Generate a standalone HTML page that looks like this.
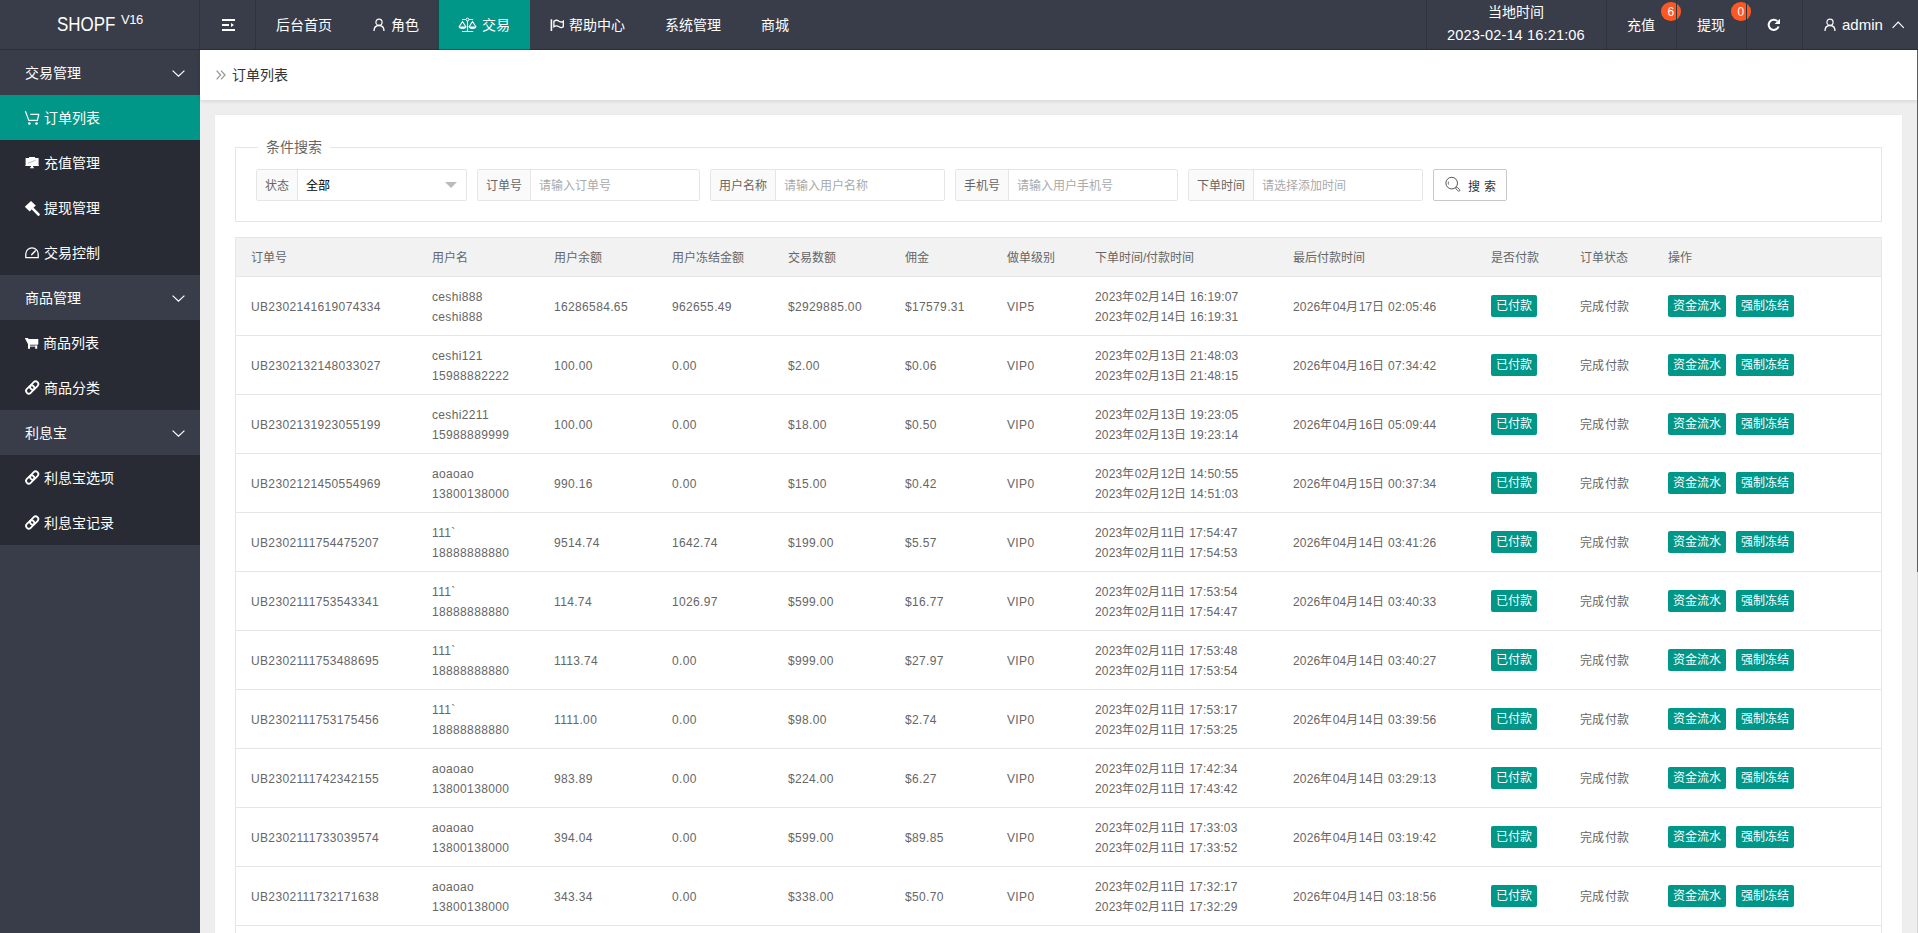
<!DOCTYPE html>
<html lang="zh-CN"><head><meta charset="utf-8">
<style>
*{margin:0;padding:0;box-sizing:border-box}
html,body{width:1918px;height:933px;overflow:hidden;background:#EEEEEE;font-family:"Liberation Sans",sans-serif;font-size:14px;color:#333}
.abs{position:absolute}
#hd{position:absolute;left:0;top:0;width:1918px;height:50px;background:#393D49}
#hdb{position:absolute;left:0;top:49px;width:1918px;height:1px;background:rgba(0,0,0,.22);z-index:5}
#hd .t{position:absolute;color:#fff;font-size:14px;line-height:14px;white-space:nowrap}
.sep{position:absolute;top:0;width:1px;height:50px;background:#30333d}
#logo{position:absolute;left:0;top:0;width:200px;height:50px;color:#fff;font-size:20px}
.badge{position:absolute;width:19.5px;height:18.5px;border-radius:50%;background:#FF5722;color:#fff;font-size:12px;line-height:20px;text-align:center}
#navact{position:absolute;left:438px;top:0;width:92px;height:50px;background:#009688;border-left:1px solid #0d4f4c}
#side{position:absolute;left:0;top:50px;width:200px;height:883px;background:#393D49}
.grp{position:absolute;left:0;width:200px;height:45px;color:#fff;font-size:14px}
.sub{position:absolute;left:0;width:200px;background:#282B33}
.item{position:absolute;left:0;width:200px;height:45px;color:#fff;font-size:14px}
.item.on{background:#009688}
.lbl{position:absolute;top:16px;line-height:14px;white-space:nowrap}
#crumb{position:absolute;left:200px;top:50px;width:1717px;height:50px;background:#fff;box-shadow:0 1px 4px rgba(0,0,0,.12)}
#rb{position:absolute;left:1917px;top:50px;width:1px;height:522px;background:#5c5c5c;z-index:3}
#rb2{position:absolute;left:1917px;top:572px;width:1px;height:361px;background:#d4d4d4;z-index:3}
#card{position:absolute;left:215px;top:115px;width:1687px;height:830px;background:#fff;box-shadow:0 0 1px rgba(0,0,0,.08)}
#fs{position:absolute;left:235px;top:147px;width:1647px;height:75px;border:1px solid #E6E6E6}
#legend{position:absolute;left:258px;top:139px;padding:0 8px;background:#fff;color:#666;font-size:14px;line-height:16px}
.ig{position:absolute;top:169px;height:32px;border:1px solid #E6E6E6;border-radius:2px;background:#fff}
.ig .l{position:absolute;left:0;top:0;height:30px;padding-top:1px;background:#FAFAFA;border-right:1px solid #E6E6E6;color:#666;font-size:12px;line-height:30px;text-align:center}
.ig .p{position:absolute;top:1px;line-height:30px;font-size:12px;color:#aaa;white-space:nowrap}
#btn{position:absolute;left:1433px;top:169px;width:74px;height:32px;border:1px solid #C9C9C9;border-radius:2px;background:#fff}
#tbl{position:absolute;left:235px;top:237px;width:1647px;height:700px;border-left:1px solid #E6E6E6;border-right:1px solid #E6E6E6}
.th{position:absolute;left:0;width:1645px;height:40px;background:#F2F2F2;border-top:1px solid #E6E6E6;border-bottom:1px solid #E6E6E6;margin-top:-237px}
.tr{position:absolute;left:0;width:1645px;height:60px;border-bottom:1px solid #E6E6E6;margin-top:-237px}
.c{position:absolute;top:2px;line-height:58px;font-size:12px;color:#666;white-space:nowrap;letter-spacing:0.35px}
.th .c{line-height:38px;top:1px;letter-spacing:0}
.c.two{line-height:20px;top:11px}
.btn{position:absolute;top:19px;height:22px;padding:0 5px;background:#009688;color:#fff;font-size:12px;line-height:23px;border-radius:2px;white-space:nowrap}
</style></head><body>
<div id="hd">
  <div id="logo"><span class="t" style="left:56.5px;top:15.3px;font-size:19.8px;line-height:19.8px;transform:scaleX(0.856);transform-origin:0 0">SHOPF</span><span class="t" style="left:121px;top:13.4px;font-size:13px;line-height:13px;letter-spacing:-0.4px">V16</span></div>
  <div class="sep" style="left:199px"></div>
  <svg class="abs" style="left:222px;top:19px" width="14" height="12" viewBox="0 0 14 12"><rect x="0" y="0" width="13" height="2" fill="#fff"/><rect x="0" y="5" width="7" height="2" fill="#fff"/><path d="M9 4 L12 6 L9 8Z" fill="#fff"/><rect x="0" y="10" width="13" height="2" fill="#fff"/></svg>
  <div class="sep" style="left:255px"></div>
  <span class="t" style="left:276px;top:18px">后台首页</span>
  <svg class="abs" style="left:373px;top:18px" width="12" height="13" viewBox="0 0 12 13"><circle cx="6" cy="4.2" r="3.1" fill="none" stroke="#fff" stroke-width="1.2"/><path d="M1 13 C1 9 3 7.5 6 7.5 C9 7.5 11 9 11 13" fill="none" stroke="#fff" stroke-width="1.3"/></svg>
  <span class="t" style="left:391px;top:18px">角色</span>
  <div id="navact"></div>
  <svg class="abs" style="left:454px;top:12px" width="30" height="26" viewBox="0 0 30 26"><path d="M8 7.5 H19.2 M13.5 8.5 V19.5 M8 19.5 H19.2 M5 15 L8.5 9.5 L12 15 M15 15 L18.5 9.5 L22 15" fill="none" stroke="#fff" stroke-width="1.1"/><circle cx="13.5" cy="7.5" r="1.4" fill="#009688" stroke="#fff" stroke-width="1"/><path d="M4.6 14.6 H12.4 A3.9 2.3 0 0 1 4.6 14.6Z M14.6 14.6 H22.4 A3.9 2.3 0 0 1 14.6 14.6Z" fill="#fff"/></svg>
  <span class="t" style="left:482px;top:18px">交易</span>
  <svg class="abs" style="left:544px;top:12px" width="26" height="26" viewBox="0 0 26 26"><path d="M7.4 7.3 V19" stroke="#fff" stroke-width="1.6"/><path d="M9.9 9.2 C11.6 8 13.4 8 15 9.2 C16.6 10.3 18.2 10.2 19.3 9.2 V14.8 C18.2 15.8 16.6 15.9 15 14.8 C13.4 13.7 11.6 13.6 9.9 14.8 Z" fill="none" stroke="#fff" stroke-width="1.3"/></svg>
  <span class="t" style="left:569px;top:18px">帮助中心</span>
  <span class="t" style="left:665px;top:18px">系统管理</span>
  <span class="t" style="left:761px;top:18px">商城</span>

  <div class="sep" style="left:1426px"></div>
  <span class="t" style="left:1488px;top:5px">当地时间</span>
  <span class="t" style="left:1447px;top:28px;font-size:14.6px;letter-spacing:0.12px">2023-02-14 16:21:06</span>
  <div class="sep" style="left:1606px"></div>
  <span class="t" style="left:1627px;top:18px">充值</span>
  <div class="badge" style="left:1661px;top:2px">6</div>
  <div class="sep" style="left:1676px"></div>
  <span class="t" style="left:1697px;top:18px">提现</span>
  <div class="badge" style="left:1731px;top:2px">0</div>
  <div class="sep" style="left:1746px"></div>
  <svg class="abs" style="left:1767px;top:18px" width="14" height="14" viewBox="0 0 14 14"><path d="M11.6 8.5 A5.1 5.1 0 1 1 10.3 3.1" fill="none" stroke="#fff" stroke-width="2"/><path d="M13 0.7 V6.1 H7.6Z" fill="#fff"/></svg>
  <div class="sep" style="left:1802px"></div>
  <svg class="abs" style="left:1824px;top:18px" width="12" height="13" viewBox="0 0 12 13"><circle cx="6" cy="4.2" r="3.1" fill="none" stroke="#fff" stroke-width="1.2"/><path d="M1 13 C1 9 3 7.5 6 7.5 C9 7.5 11 9 11 13" fill="none" stroke="#fff" stroke-width="1.3"/></svg>
  <span class="t" style="left:1842px;top:18px;font-size:15px">admin</span>
  <svg class="abs" style="left:1892px;top:21px" width="13" height="8" viewBox="0 0 13 8"><path d="M0.6 6.9 L6.2 1.2 L11.8 6.9" fill="none" stroke="#fff" stroke-width="1.2"/></svg>
</div>

<div id="hdb"></div>
<div id="side">
  <div class="grp" style="top:0"><span class="lbl" style="left:25px">交易管理</span>
    <svg class="abs" style="left:171.5px;top:19.5px" width="13" height="7" viewBox="0 0 13 7"><path d="M0.6 0.6 L6.5 6.2 L12.4 0.6" fill="none" stroke="#fff" stroke-width="1.2"/></svg></div>
  <div class="sub" style="top:45px;height:180px">
    <div class="item on" style="top:0"><svg class="abs" style="left:20px;top:10px" width="24" height="25" viewBox="0 0 24 25"><path d="M5.4 6.3 L8.8 15.4 H17.4 L18.8 9.4 H10.3" fill="none" stroke="#fff" stroke-width="1.2" stroke-linejoin="round"/><circle cx="9.3" cy="18.5" r="1.3" fill="#fff"/><circle cx="16.5" cy="18.5" r="1.3" fill="#fff"/></svg><span class="lbl" style="left:44px">订单列表</span></div>
    <div class="item" style="top:45px"><svg class="abs" style="left:20px;top:10px" width="24" height="25" viewBox="0 0 24 25"><path d="M5.6 8 H9 L9.2 7 H15 L15.2 8 H18.6 V15.2 L19.2 15.9 H5 L5.6 15.2Z" fill="#fff"/><path d="M11 15.8 H13 V16.6 L14.2 18.2 H9.8 L11 16.6Z" fill="#fff"/><path d="M8 13 L10.5 12.3 L12.5 11.5 L15.5 10.3" fill="none" stroke="#8a8d94" stroke-width="0.6"/></svg><span class="lbl" style="left:44px">充值管理</span></div>
    <div class="item" style="top:90px"><svg class="abs" style="left:20px;top:10px" width="24" height="25" viewBox="0 0 24 25"><path d="M4.8 11.8 L11 6 L15.8 10.5 L9.7 16.4Z" fill="#fff"/><path d="M13.2 14.2 L18.5 19.5" stroke="#fff" stroke-width="2.6" stroke-linecap="round"/></svg><span class="lbl" style="left:44px">提现管理</span></div>
    <div class="item" style="top:135px"><svg class="abs" style="left:20px;top:10px" width="24" height="25" viewBox="0 0 24 25"><path d="M5.8 17.6 V14 A6.2 6.2 0 0 1 18.2 14 V17.6 Z" fill="none" stroke="#fff" stroke-width="1.3"/><path d="M11.8 14.6 L15.2 10.9" stroke="#fff" stroke-width="1.5" stroke-linecap="round"/></svg><span class="lbl" style="left:44px">交易控制</span></div>
  </div>
  <div class="grp" style="top:225px"><span class="lbl" style="left:25px">商品管理</span>
    <svg class="abs" style="left:171.5px;top:19.5px" width="13" height="7" viewBox="0 0 13 7"><path d="M0.6 0.6 L6.5 6.2 L12.4 0.6" fill="none" stroke="#fff" stroke-width="1.2"/></svg></div>
  <div class="sub" style="top:270px;height:90px">
    <div class="item" style="top:0"><svg class="abs" style="left:20px;top:10px" width="24" height="25" viewBox="0 0 24 25"><path d="M4.8 8 H8 L8.4 9 H18.3 V14.2 L17.6 14.8 H8.3Z" fill="#fff"/><rect x="8" y="14" width="2" height="4.8" fill="#fff"/><rect x="15.2" y="15.6" width="2" height="3.2" fill="#fff"/><rect x="8" y="15.6" width="9.2" height="1" fill="#fff"/></svg><span class="lbl" style="left:43px">商品列表</span></div>
    <div class="item" style="top:45px"><svg class="abs" style="left:20px;top:10px" width="24" height="25" viewBox="0 0 24 25"><g transform="rotate(-45 12.2 12.5)"><rect x="4.7" y="9.8" width="9.4" height="5.4" rx="2.7" fill="none" stroke="#fff" stroke-width="1.8"/><rect x="10.3" y="9.8" width="9.4" height="5.4" rx="2.7" fill="none" stroke="#fff" stroke-width="1.8"/></g></svg><span class="lbl" style="left:44px">商品分类</span></div>
  </div>
  <div class="grp" style="top:360px"><span class="lbl" style="left:25px">利息宝</span>
    <svg class="abs" style="left:171.5px;top:19.5px" width="13" height="7" viewBox="0 0 13 7"><path d="M0.6 0.6 L6.5 6.2 L12.4 0.6" fill="none" stroke="#fff" stroke-width="1.2"/></svg></div>
  <div class="sub" style="top:405px;height:90px">
    <div class="item" style="top:0"><svg class="abs" style="left:20px;top:10px" width="24" height="25" viewBox="0 0 24 25"><g transform="rotate(-45 12.2 12.5)"><rect x="4.7" y="9.8" width="9.4" height="5.4" rx="2.7" fill="none" stroke="#fff" stroke-width="1.8"/><rect x="10.3" y="9.8" width="9.4" height="5.4" rx="2.7" fill="none" stroke="#fff" stroke-width="1.8"/></g></svg><span class="lbl" style="left:44px">利息宝选项</span></div>
    <div class="item" style="top:45px"><svg class="abs" style="left:20px;top:10px" width="24" height="25" viewBox="0 0 24 25"><g transform="rotate(-45 12.2 12.5)"><rect x="4.7" y="9.8" width="9.4" height="5.4" rx="2.7" fill="none" stroke="#fff" stroke-width="1.8"/><rect x="10.3" y="9.8" width="9.4" height="5.4" rx="2.7" fill="none" stroke="#fff" stroke-width="1.8"/></g></svg><span class="lbl" style="left:44px">利息宝记录</span></div>
  </div>
</div>

<div id="crumb">
  <svg class="abs" style="left:16px;top:20px" width="10" height="10" viewBox="0 0 10 10"><path d="M0.6 0.6 L4.6 5 L0.6 9.4 M5 0.6 L9 5 L5 9.4" fill="none" stroke="#999" stroke-width="1.3"/></svg>
  <span class="abs" style="left:32px;top:18px;font-size:14px;line-height:14px;color:#333">订单列表</span>
</div>
<div id="rb"></div><div id="rb2"></div>

<div id="card"></div>
<div id="fs"></div>
<div id="legend">条件搜索</div>

<div class="ig" style="left:256px;width:211px"><div class="l" style="width:41px">状态</div><span class="p" style="left:49px;color:#000">全部</span>
  <svg class="abs" style="left:188px;top:12px" width="12" height="7" viewBox="0 0 12 7"><path d="M0 0 H12 L6 6Z" fill="#bbb"/></svg></div>
<div class="ig" style="left:477px;width:223px"><div class="l" style="width:53px">订单号</div><span class="p" style="left:61px">请输入订单号</span></div>
<div class="ig" style="left:710px;width:235px"><div class="l" style="width:65px">用户名称</div><span class="p" style="left:73px">请输入用户名称</span></div>
<div class="ig" style="left:955px;width:223px"><div class="l" style="width:53px">手机号</div><span class="p" style="left:61px">请输入用户手机号</span></div>
<div class="ig" style="left:1188px;width:235px"><div class="l" style="width:65px">下单时间</div><span class="p" style="left:73px">请选择添加时间</span></div>
<div id="btn"><svg class="abs" style="left:10px;top:6px" width="18" height="18" viewBox="0 0 18 18"><circle cx="7.7" cy="7.1" r="5.8" fill="none" stroke="#555" stroke-width="1"/><path d="M4.6 5.6 A3.4 3.4 0 0 0 4.6 8.6" fill="none" stroke="#666" stroke-width="0.9"/><g transform="rotate(45 13.6 13)"><rect x="11.4" y="12" width="5" height="2" rx="1" fill="#fff" stroke="#555" stroke-width="0.9"/></g></svg><span class="abs" style="left:34px;top:9.5px;font-size:12px;line-height:14px;color:#333;letter-spacing:4px">搜索</span></div>

<div id="tbl">
<div class="th" style="top:237px">
<span class="c" style="left:15px">订单号</span>
<span class="c" style="left:196px">用户名</span>
<span class="c" style="left:318px">用户余额</span>
<span class="c" style="left:436px">用户冻结金额</span>
<span class="c" style="left:552px">交易数额</span>
<span class="c" style="left:669px">佣金</span>
<span class="c" style="left:771px">做单级别</span>
<span class="c" style="left:859px">下单时间/付款时间</span>
<span class="c" style="left:1057px">最后付款时间</span>
<span class="c" style="left:1255px">是否付款</span>
<span class="c" style="left:1344px">订单状态</span>
<span class="c" style="left:1432px">操作</span>
</div>
<div class="tr" style="top:276px">
<span class="c" style="left:15px">UB2302141619074334</span>
<span class="c two" style="left:196px">ceshi888<br>ceshi888</span>
<span class="c" style="left:318px">16286584.65</span>
<span class="c" style="left:436px">962655.49</span>
<span class="c" style="left:552px">$2929885.00</span>
<span class="c" style="left:669px">$17579.31</span>
<span class="c" style="left:771px">VIP5</span>
<span class="c two" style="left:859px;letter-spacing:0.2px">2023年02月14日 16:19:07<br>2023年02月14日 16:19:31</span>
<span class="c" style="left:1057px;letter-spacing:0.2px">2026年04月17日 02:05:46</span>
<span class="btn" style="left:1255px">已付款</span>
<span class="c" style="left:1344px">完成付款</span>
<span class="btn" style="left:1432px">资金流水</span><span class="btn" style="left:1500px">强制冻结</span>
</div>
<div class="tr" style="top:335px">
<span class="c" style="left:15px">UB2302132148033027</span>
<span class="c two" style="left:196px">ceshi121<br>15988882222</span>
<span class="c" style="left:318px">100.00</span>
<span class="c" style="left:436px">0.00</span>
<span class="c" style="left:552px">$2.00</span>
<span class="c" style="left:669px">$0.06</span>
<span class="c" style="left:771px">VIP0</span>
<span class="c two" style="left:859px;letter-spacing:0.2px">2023年02月13日 21:48:03<br>2023年02月13日 21:48:15</span>
<span class="c" style="left:1057px;letter-spacing:0.2px">2026年04月16日 07:34:42</span>
<span class="btn" style="left:1255px">已付款</span>
<span class="c" style="left:1344px">完成付款</span>
<span class="btn" style="left:1432px">资金流水</span><span class="btn" style="left:1500px">强制冻结</span>
</div>
<div class="tr" style="top:394px">
<span class="c" style="left:15px">UB2302131923055199</span>
<span class="c two" style="left:196px">ceshi2211<br>15988889999</span>
<span class="c" style="left:318px">100.00</span>
<span class="c" style="left:436px">0.00</span>
<span class="c" style="left:552px">$18.00</span>
<span class="c" style="left:669px">$0.50</span>
<span class="c" style="left:771px">VIP0</span>
<span class="c two" style="left:859px;letter-spacing:0.2px">2023年02月13日 19:23:05<br>2023年02月13日 19:23:14</span>
<span class="c" style="left:1057px;letter-spacing:0.2px">2026年04月16日 05:09:44</span>
<span class="btn" style="left:1255px">已付款</span>
<span class="c" style="left:1344px">完成付款</span>
<span class="btn" style="left:1432px">资金流水</span><span class="btn" style="left:1500px">强制冻结</span>
</div>
<div class="tr" style="top:453px">
<span class="c" style="left:15px">UB2302121450554969</span>
<span class="c two" style="left:196px">aoaoao<br>13800138000</span>
<span class="c" style="left:318px">990.16</span>
<span class="c" style="left:436px">0.00</span>
<span class="c" style="left:552px">$15.00</span>
<span class="c" style="left:669px">$0.42</span>
<span class="c" style="left:771px">VIP0</span>
<span class="c two" style="left:859px;letter-spacing:0.2px">2023年02月12日 14:50:55<br>2023年02月12日 14:51:03</span>
<span class="c" style="left:1057px;letter-spacing:0.2px">2026年04月15日 00:37:34</span>
<span class="btn" style="left:1255px">已付款</span>
<span class="c" style="left:1344px">完成付款</span>
<span class="btn" style="left:1432px">资金流水</span><span class="btn" style="left:1500px">强制冻结</span>
</div>
<div class="tr" style="top:512px">
<span class="c" style="left:15px">UB2302111754475207</span>
<span class="c two" style="left:196px">111`<br>18888888880</span>
<span class="c" style="left:318px">9514.74</span>
<span class="c" style="left:436px">1642.74</span>
<span class="c" style="left:552px">$199.00</span>
<span class="c" style="left:669px">$5.57</span>
<span class="c" style="left:771px">VIP0</span>
<span class="c two" style="left:859px;letter-spacing:0.2px">2023年02月11日 17:54:47<br>2023年02月11日 17:54:53</span>
<span class="c" style="left:1057px;letter-spacing:0.2px">2026年04月14日 03:41:26</span>
<span class="btn" style="left:1255px">已付款</span>
<span class="c" style="left:1344px">完成付款</span>
<span class="btn" style="left:1432px">资金流水</span><span class="btn" style="left:1500px">强制冻结</span>
</div>
<div class="tr" style="top:571px">
<span class="c" style="left:15px">UB2302111753543341</span>
<span class="c two" style="left:196px">111`<br>18888888880</span>
<span class="c" style="left:318px">114.74</span>
<span class="c" style="left:436px">1026.97</span>
<span class="c" style="left:552px">$599.00</span>
<span class="c" style="left:669px">$16.77</span>
<span class="c" style="left:771px">VIP0</span>
<span class="c two" style="left:859px;letter-spacing:0.2px">2023年02月11日 17:53:54<br>2023年02月11日 17:54:47</span>
<span class="c" style="left:1057px;letter-spacing:0.2px">2026年04月14日 03:40:33</span>
<span class="btn" style="left:1255px">已付款</span>
<span class="c" style="left:1344px">完成付款</span>
<span class="btn" style="left:1432px">资金流水</span><span class="btn" style="left:1500px">强制冻结</span>
</div>
<div class="tr" style="top:630px">
<span class="c" style="left:15px">UB2302111753488695</span>
<span class="c two" style="left:196px">111`<br>18888888880</span>
<span class="c" style="left:318px">1113.74</span>
<span class="c" style="left:436px">0.00</span>
<span class="c" style="left:552px">$999.00</span>
<span class="c" style="left:669px">$27.97</span>
<span class="c" style="left:771px">VIP0</span>
<span class="c two" style="left:859px;letter-spacing:0.2px">2023年02月11日 17:53:48<br>2023年02月11日 17:53:54</span>
<span class="c" style="left:1057px;letter-spacing:0.2px">2026年04月14日 03:40:27</span>
<span class="btn" style="left:1255px">已付款</span>
<span class="c" style="left:1344px">完成付款</span>
<span class="btn" style="left:1432px">资金流水</span><span class="btn" style="left:1500px">强制冻结</span>
</div>
<div class="tr" style="top:689px">
<span class="c" style="left:15px">UB2302111753175456</span>
<span class="c two" style="left:196px">111`<br>18888888880</span>
<span class="c" style="left:318px">1111.00</span>
<span class="c" style="left:436px">0.00</span>
<span class="c" style="left:552px">$98.00</span>
<span class="c" style="left:669px">$2.74</span>
<span class="c" style="left:771px">VIP0</span>
<span class="c two" style="left:859px;letter-spacing:0.2px">2023年02月11日 17:53:17<br>2023年02月11日 17:53:25</span>
<span class="c" style="left:1057px;letter-spacing:0.2px">2026年04月14日 03:39:56</span>
<span class="btn" style="left:1255px">已付款</span>
<span class="c" style="left:1344px">完成付款</span>
<span class="btn" style="left:1432px">资金流水</span><span class="btn" style="left:1500px">强制冻结</span>
</div>
<div class="tr" style="top:748px">
<span class="c" style="left:15px">UB2302111742342155</span>
<span class="c two" style="left:196px">aoaoao<br>13800138000</span>
<span class="c" style="left:318px">983.89</span>
<span class="c" style="left:436px">0.00</span>
<span class="c" style="left:552px">$224.00</span>
<span class="c" style="left:669px">$6.27</span>
<span class="c" style="left:771px">VIP0</span>
<span class="c two" style="left:859px;letter-spacing:0.2px">2023年02月11日 17:42:34<br>2023年02月11日 17:43:42</span>
<span class="c" style="left:1057px;letter-spacing:0.2px">2026年04月14日 03:29:13</span>
<span class="btn" style="left:1255px">已付款</span>
<span class="c" style="left:1344px">完成付款</span>
<span class="btn" style="left:1432px">资金流水</span><span class="btn" style="left:1500px">强制冻结</span>
</div>
<div class="tr" style="top:807px">
<span class="c" style="left:15px">UB2302111733039574</span>
<span class="c two" style="left:196px">aoaoao<br>13800138000</span>
<span class="c" style="left:318px">394.04</span>
<span class="c" style="left:436px">0.00</span>
<span class="c" style="left:552px">$599.00</span>
<span class="c" style="left:669px">$89.85</span>
<span class="c" style="left:771px">VIP0</span>
<span class="c two" style="left:859px;letter-spacing:0.2px">2023年02月11日 17:33:03<br>2023年02月11日 17:33:52</span>
<span class="c" style="left:1057px;letter-spacing:0.2px">2026年04月14日 03:19:42</span>
<span class="btn" style="left:1255px">已付款</span>
<span class="c" style="left:1344px">完成付款</span>
<span class="btn" style="left:1432px">资金流水</span><span class="btn" style="left:1500px">强制冻结</span>
</div>
<div class="tr" style="top:866px">
<span class="c" style="left:15px">UB2302111732171638</span>
<span class="c two" style="left:196px">aoaoao<br>13800138000</span>
<span class="c" style="left:318px">343.34</span>
<span class="c" style="left:436px">0.00</span>
<span class="c" style="left:552px">$338.00</span>
<span class="c" style="left:669px">$50.70</span>
<span class="c" style="left:771px">VIP0</span>
<span class="c two" style="left:859px;letter-spacing:0.2px">2023年02月11日 17:32:17<br>2023年02月11日 17:32:29</span>
<span class="c" style="left:1057px;letter-spacing:0.2px">2026年04月14日 03:18:56</span>
<span class="btn" style="left:1255px">已付款</span>
<span class="c" style="left:1344px">完成付款</span>
<span class="btn" style="left:1432px">资金流水</span><span class="btn" style="left:1500px">强制冻结</span>
</div>
<div class="tr" style="top:925px">
<span class="c" style="left:15px">UB2302111731000000</span>
<span class="c two" style="left:196px">aoaoao<br>13800138000</span>
<span class="c" style="left:318px">343.34</span>
<span class="c" style="left:436px">0.00</span>
<span class="c" style="left:552px">$338.00</span>
<span class="c" style="left:669px">$50.70</span>
<span class="c" style="left:771px">VIP0</span>
<span class="c two" style="left:859px;letter-spacing:0.2px">2023年02月11日 17:32:17<br>2023年02月11日 17:32:29</span>
<span class="c" style="left:1057px;letter-spacing:0.2px">2026年04月14日 03:18:56</span>
<span class="btn" style="left:1255px">已付款</span>
<span class="c" style="left:1344px">完成付款</span>
<span class="btn" style="left:1432px">资金流水</span><span class="btn" style="left:1500px">强制冻结</span>
</div>
</div>
</body></html>
